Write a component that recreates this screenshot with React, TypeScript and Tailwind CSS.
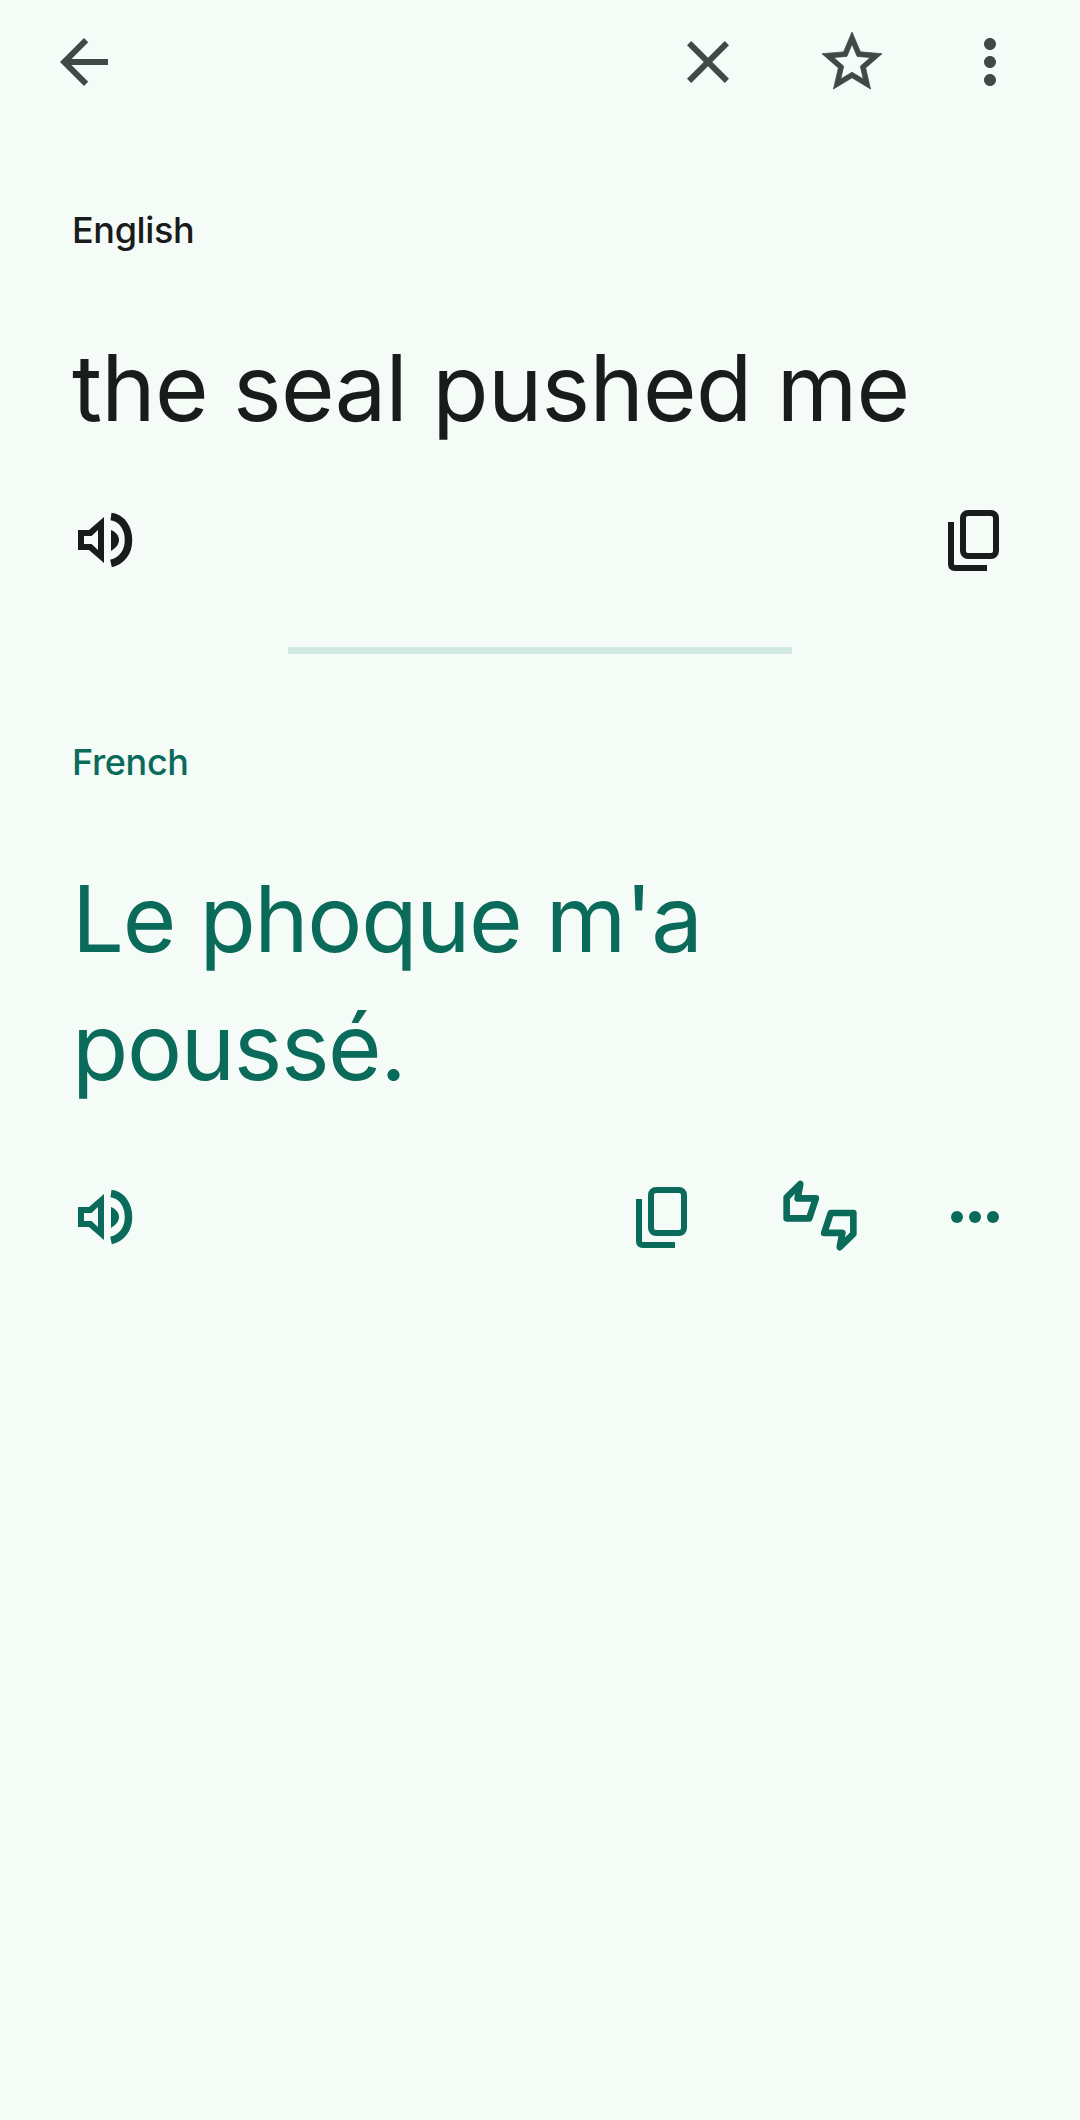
const dark = '#191c1b';
const teal = '#0a6b5b';

function Speaker({ color }: { color: string }) {
  return (
    <svg width="58" height="60" viewBox="0 0 58 60" fill={color}>
      <path fillRule="evenodd" d="M2 20H13L28 7V53L13 40H2ZM8 26V34H15.5L22 40V20L15.5 26Z" />
      <path d="M35 20C40 22 43 26 43 30C43 34 40 38 35 41Z" />
      <path d="M35 6.5C46 8 52.5 18 52.5 30C52.5 42 46 51 35 53.5" fill="none" stroke={color} strokeWidth="7.5" />
    </svg>
  );
}

function Copy({ color }: { color: string }) {
  return (
    <svg width="54" height="64" viewBox="0 0 54 64" fill="none" stroke={color} strokeWidth="6">
      <rect x="16" y="5" width="33" height="43" rx="5" />
      <path d="M4 14V56Q4 60 8 60H40" />
    </svg>
  );
}

function Feedback({ color }: { color: string }) {
  return (
    <svg width="78" height="75" viewBox="480 60 235 225" fill="none" stroke={color} strokeWidth="20" strokeLinejoin="round" strokeLinecap="round">
      <path d="M497 115L538 75L530 118H585L565 178H497Z" />
      <path d="M698 225L657 265L665 222H610L630 162H698Z" />
    </svg>
  );
}

export default function App() {
  return (
    <div className="min-h-[2120px] w-[1080px] bg-[#f5fbf7] font-['Inter',sans-serif]">
      <div className="flex items-center pt-[26px] pl-[48px] pr-[54px] text-[#3f4946]">
        <svg width="72" height="72" viewBox="0 0 24 24" fill="currentColor">
          <path d="M20 11H7.83l5.59-5.59L12 4l-8 8 8 8 1.41-1.41L7.83 13H20v-2z" />
        </svg>
        <svg className="ml-auto" width="72" height="72" viewBox="0 0 24 24" fill="currentColor">
          <path d="M19 6.41L17.59 5 12 10.59 6.41 5 5 6.41 10.59 12 5 17.59 6.41 19 12 13.41 17.59 19 19 17.59 13.41 12z" />
        </svg>
        <svg className="ml-[72px]" width="72" height="72" viewBox="0 0 24 24" fill="currentColor">
          <path d="M22 9.24l-7.19-.62L12 2 9.19 8.63 2 9.24l5.46 4.73L5.82 21 12 17.27 18.18 21l-1.63-7.03L22 9.24zM12 15.4l-3.76 2.27 1-4.28-3.32-2.88 4.38-.38L12 6.1l1.71 4.04 4.38.38-3.32 2.88 1 4.28L12 15.4z" stroke="currentColor" strokeWidth="0.25" />
        </svg>
        <svg className="ml-[66px]" width="72" height="72" viewBox="0 0 24 24" fill="currentColor">
          <path d="M12 8c1.1 0 2-.9 2-2s-.9-2-2-2-2 .9-2 2 .9 2 2 2zm0 2c-1.1 0-2 .9-2 2s.9 2 2 2 2-.9 2-2-.9-2-2-2zm0 6c-1.1 0-2 .9-2 2s.9 2 2 2 2-.9 2-2-.9-2-2-2z" />
        </svg>
      </div>

      <div className="px-[72px] pt-[110px]">
        <div className="text-[36px] font-medium leading-[44px] tracking-[-0.01em] text-[#191c1b]">English</div>
        <div className="mt-[72px] text-[92px] leading-[128px] tracking-[-0.008em] text-[#191c1b]">the seal pushed me</div>
      </div>
      <div className="mt-[56px] flex items-center pl-[76px] pr-[79px]">
        <Speaker color={dark} />
        <div className="ml-auto">
          <Copy color={dark} />
        </div>
      </div>

      <div className="mx-auto mt-[75px] h-[7px] w-[504px] bg-[#d0eae1]" />

      <div className="px-[72px] pt-[86px]">
        <div className="text-[36px] font-medium leading-[44px] tracking-[-0.01em] text-[#0a6b5b]">French</div>
        <div className="mt-[71px] w-[800px] text-[92px] leading-[128px] tracking-[-0.015em] text-[#0a6b5b]">Le phoque m'a poussé.</div>
      </div>
      <div className="mt-[68px] flex items-center pl-[76px] pr-[80px]">
        <Speaker color={teal} />
        <div className="ml-auto">
          <Copy color={teal} />
        </div>
        <div className="ml-[92px]">
          <Feedback color={teal} />
        </div>
        <svg className="ml-[91px]" width="50" height="12" viewBox="0 0 50 12" fill={teal}>
          <circle cx="7" cy="6" r="6" />
          <circle cx="25" cy="6" r="6" />
          <circle cx="43" cy="6" r="6" />
        </svg>
      </div>
    </div>
  );
}
